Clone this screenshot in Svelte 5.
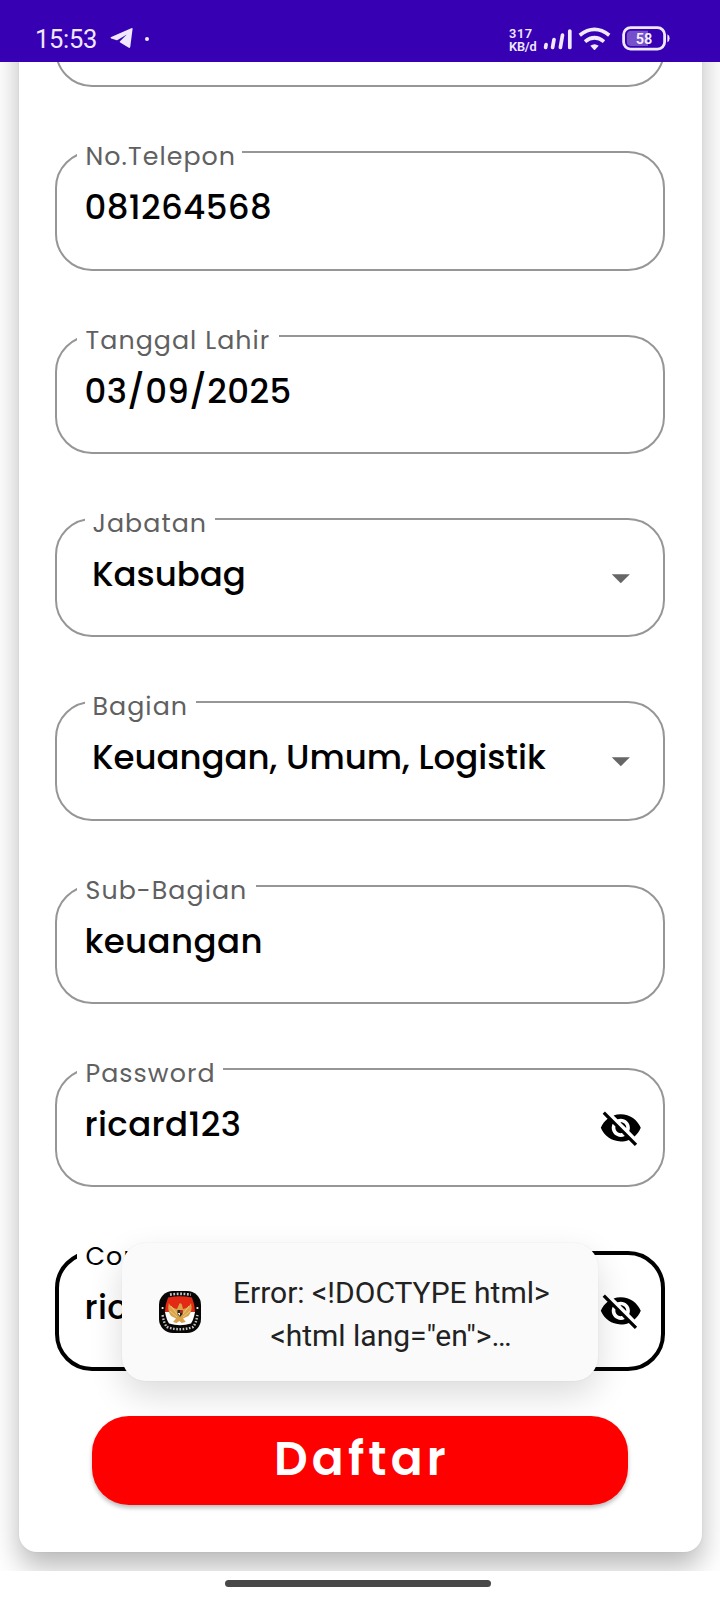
<script>
  const fields = [
    { label: 'No.Telepon', value: '081264568', gap: 165 },
    { label: 'Tanggal Lahir', value: '03/09/2025', gap: 202 },
    { label: 'Jabatan', value: 'Kasubag', gap: 130, icon: 'arrow' },
    { label: 'Bagian', value: 'Keuangan, Umum, Logistik', gap: 111, icon: 'arrow' },
    { label: 'Sub-Bagian', value: 'keuangan', gap: 179 },
    { label: 'Password', value: 'ricard123', gap: 145.5, icon: 'eye' },
    { label: 'Confirm Password', value: 'ricard123', gap: 250, icon: 'eye', focused: true }
  ];
</script>

<div class="screen">
  <header>
    <div class="left">
      <span class="time">15:53</span>
      <svg class="plane" width="24" height="22" viewBox="0 0 24 22"><path d="M22.6 .8 L20.3 18.8 Q20 20.6 18.4 19.6 L10.2 14.6 Q9.4 14 10 13.2 L16.8 6.4 L7.6 11.9 Q6.8 12.3 6 12 L1.2 10.4 Q0 9.8 1.2 9.1 L21.2 .2 Q22.8-.3 22.6 .8Z" fill="#efe8ff"/></svg>
      <i class="dot"></i>
    </div>
    <div class="right">
      <div class="speed"><span>317</span><span>KB/d</span></div>
      <svg class="signal" width="30" height="24" viewBox="0 0 30 24" stroke="#f0e9ff" stroke-width="3.7" stroke-linecap="round"><path d="M3.1 17.5 L2.6 20.4M11 12.5 L9.6 20.4M19.5 8 L17.4 20.4M26.8 4 V20.4"/></svg>
      <svg class="wifi" width="33" height="24" viewBox="0 0 34 24" fill="none" stroke="#f0e9ff" stroke-width="3.8"><path d="M1.8 8.1 Q17-4 32.2 8.1M7.2 14.7 Q17 6.7 26.8 14.7"/><path d="M12.7 19 Q17 15.6 21.3 19 L17.6 23 Q17 23.5 16.4 23Z" fill="#f0e9ff" stroke="none"/></svg>
      <svg class="battery" width="49" height="25" viewBox="0 0 49 25"><rect x="1.6" y="1.6" width="41" height="21.5" rx="7" fill="none" stroke="#efe8ff" stroke-width="2.8"/><path d="M9 4.8H26V20H9Q4.8 20 4.8 15.5V9.3Q4.8 4.8 9 4.8Z" fill="#7650ca"/><path d="M45.4 8.3Q47.6 9.3 47.6 12.3T45.4 16.3Z" fill="#efe8ff"/><text x="22" y="17.7" text-anchor="middle" font-family="Roboto" font-weight="600" font-size="14.5" fill="#f6f1ff">58</text></svg>
    </div>
  </header>

  <main>
    <form class="card">
      <div class="field"></div>
      {#each fields as f}
        <div class="field" class:focused={f.focused} class:select={f.icon === 'arrow'}>
          <span class="label" style="width:{f.gap}px">{f.label}</span>
          <span class="value">{f.value}</span>
          {#if f.icon === 'arrow'}
            <svg class="icon" viewBox="0 0 24 24" fill="#666"><path d="M7 10l5 5 5-5z"/></svg>
          {:else if f.icon === 'eye'}
            <svg class="icon" viewBox="0 0 24 24" fill="#000"><path d="M12 7c2.76 0 5 2.24 5 5 0 .65-.13 1.26-.36 1.83l2.92 2.92c1.51-1.26 2.7-2.89 3.43-4.75-1.73-4.39-6-7.5-11-7.5-1.4 0-2.74.25-3.98.7l2.16 2.16C10.74 7.13 11.35 7 12 7zM2 4.27l2.28 2.28.46.46C3.08 8.3 1.78 10.02 1 12c1.73 4.39 6 7.5 11 7.5 1.55 0 3.03-.3 4.38-.84l.42.42L19.73 22 21 20.73 3.27 3 2 4.27zM7.53 9.8l1.55 1.55c-.05.21-.08.43-.08.65 0 1.66 1.34 3 3 3 .22 0 .44-.03.65-.08l1.55 1.55c-.67.33-1.41.53-2.2.53-2.76 0-5-2.24-5-5 0-.79.2-1.53.53-2.2zm4.31-.78l3.15 3.15.02-.16c0-1.66-1.34-3-3-3l-.17.01z"/></svg>
          {/if}
        </div>
      {/each}
      <button type="button">Daftar</button>
    </form>
  </main>

  <footer><i></i></footer>

  <div class="toast">
    <svg width="42" height="42" viewBox="0 0 42 42">
      <rect width="42" height="42" rx="14" fill="#090606"/>
      <path d="M9 6.5Q21 4 33 6.5Q36 14 36 21H6Q6 14 9 6.5Z" fill="#e32814"/>
      <path d="M6 21H36Q34.5 29 32 32.5Q21 36 10 32.5Q7.5 29 6 21Z" fill="#fff"/>
      <path d="M20.5 12.5Q23 11.5 23.2 15L24 18Q30 17 32 12Q34 20 29.5 25L24 27.5L26.8 31L22.5 32L20.5 30L17.5 32L14 31L17 27.5L12 25Q8 20 9.8 12Q12 17 18 18Z" fill="#d9a24a"/>
      <path d="M12 15L18 23M30 15L24 23M11 20L18 26M31 20L24 26" stroke="#f3d28c" stroke-width=".8"/>
      <path d="M18.5 19H23.5V23L21 26L18.5 23Z" fill="#28291d"/><path d="M21 19H23.5V22H21Z" fill="#c3221d"/><path d="M18.5 22H21V25Z" fill="#f5efe2"/>
      <circle cx="3.6" cy="17" r="1.1" fill="#fff"/><circle cx="38.4" cy="17" r="1.1" fill="#fff"/>
      <path d="M11 3.6Q21 2.2 32 3.6" fill="none" stroke="#c8c8c8" stroke-width="2.6" stroke-dasharray="1.8 1.6"/>
      <path d="M3.6 24Q5 33 8 36Q21 40.5 34 36Q37 33 38.4 24" fill="none" stroke="#c8c8c8" stroke-width="2.4" stroke-dasharray="1.6 1.6"/>
    </svg>
    <p>Error: &lt;!DOCTYPE html&gt;<br />&lt;html lang="en"&gt;…</p>
  </div>
</div>

<style>
  :global(body) { margin: 0; background: #fff; }
  .screen { position: relative; width: 720px; height: 1600px; overflow: hidden; background: #fff; font-family: Poppins, Inter, sans-serif; }
  header { box-sizing: border-box; height: 62px; padding: 15px 49px 0 35px; background: #3700b3; display: flex; justify-content: space-between; color: #efe8ff; font-family: Roboto, sans-serif; }
  .left, .right { display: flex; align-items: center; height: 47px; }
  .time { font-size: 25.5px; line-height: 47px; width: 63px; letter-spacing: -.3px; padding-top: 2px; font-weight: 450; }
  .plane { margin-left: 12px; }
  .dot { width: 4px; height: 4px; border-radius: 2px; background: #efe8ff; margin-left: 11px; }
  .speed { display: flex; flex-direction: column; font-size: 12.8px; line-height: 13px; font-weight: 600; width: 34px; padding-top: 2px; letter-spacing: -.2px; }
  .speed span:first-child { letter-spacing: .6px; }
  .wifi { margin: 0 11px 0 5px; }

  main { height: 1509px; overflow: hidden; }
  .card { box-sizing: border-box; margin: -200px 18.5px 0; height: 1690px; padding: 106px 36.5px 0; border-radius: 0 0 18px 18px; background: #fff; box-shadow: 0 0 3px rgba(0,0,0,.05), 0 15px 28px rgba(0,0,0,.28); }
  .field { position: relative; box-sizing: border-box; height: 119.33px; margin-bottom: 64px; border: 2px solid #969696; border-radius: 37px; padding: 0 20px 0 27.5px; display: flex; align-items: center; justify-content: space-between; }
  .field.focused { border: 4px solid #000; padding: 0 18px 0 25.5px; margin-bottom: 45.4px; }
  .label { position: absolute; box-sizing: border-box; left: 20px; top: -11px; padding-left: 8.5px; height: 29px; line-height: 29px; font-size: 25.3px; letter-spacing: 1.05px; white-space: nowrap; color: #606060; background: #fff; }
  .select .label { left: 28px; padding-left: 7.5px; }
  .focused .label { left: 18px; top: -13px; color: #000; }
  .value { font-size: 34px; line-height: 40px; font-weight: 500; letter-spacing: .4px; color: #000; white-space: nowrap; margin-top: -7.5px; }
  .select .value { margin-left: 7.5px; letter-spacing: -.03px; }
  .icon { width: 43.6px; height: 43.6px; flex: none; }
  button { display: block; width: 536px; height: 89px; margin: 0 auto; padding: 0 0 3px 4px; border: 0; border-radius: 37px; background: #f00; color: #fff; font: 600 47px/86px Poppins, Inter, sans-serif; letter-spacing: 4.2px; box-shadow: 0 3px 4px rgba(0,0,0,.25); }
  footer { height: 29px; display: flex; align-items: center; justify-content: center; background: #fff; }
  footer i { width: 266px; height: 7px; margin: -5px 4px 0 0; border-radius: 3.5px; background: #484848; }
  .toast { position: absolute; box-sizing: border-box; left: 122px; top: 1243px; width: 476px; height: 138px; border-radius: 24px; background: #fafafa; box-shadow: 0 0 2px rgba(0,0,0,.07), 0 14px 34px rgba(0,0,0,.14); display: flex; align-items: center; padding: 0 49px 0 37px; justify-content: space-between; }
  .toast svg { flex: none; }
  .toast p { margin: 5px 0 0; width: 316px; display: block; text-align: center; white-space: nowrap; font: 400 30px/42.7px Roboto, sans-serif; color: #222; }
</style>
